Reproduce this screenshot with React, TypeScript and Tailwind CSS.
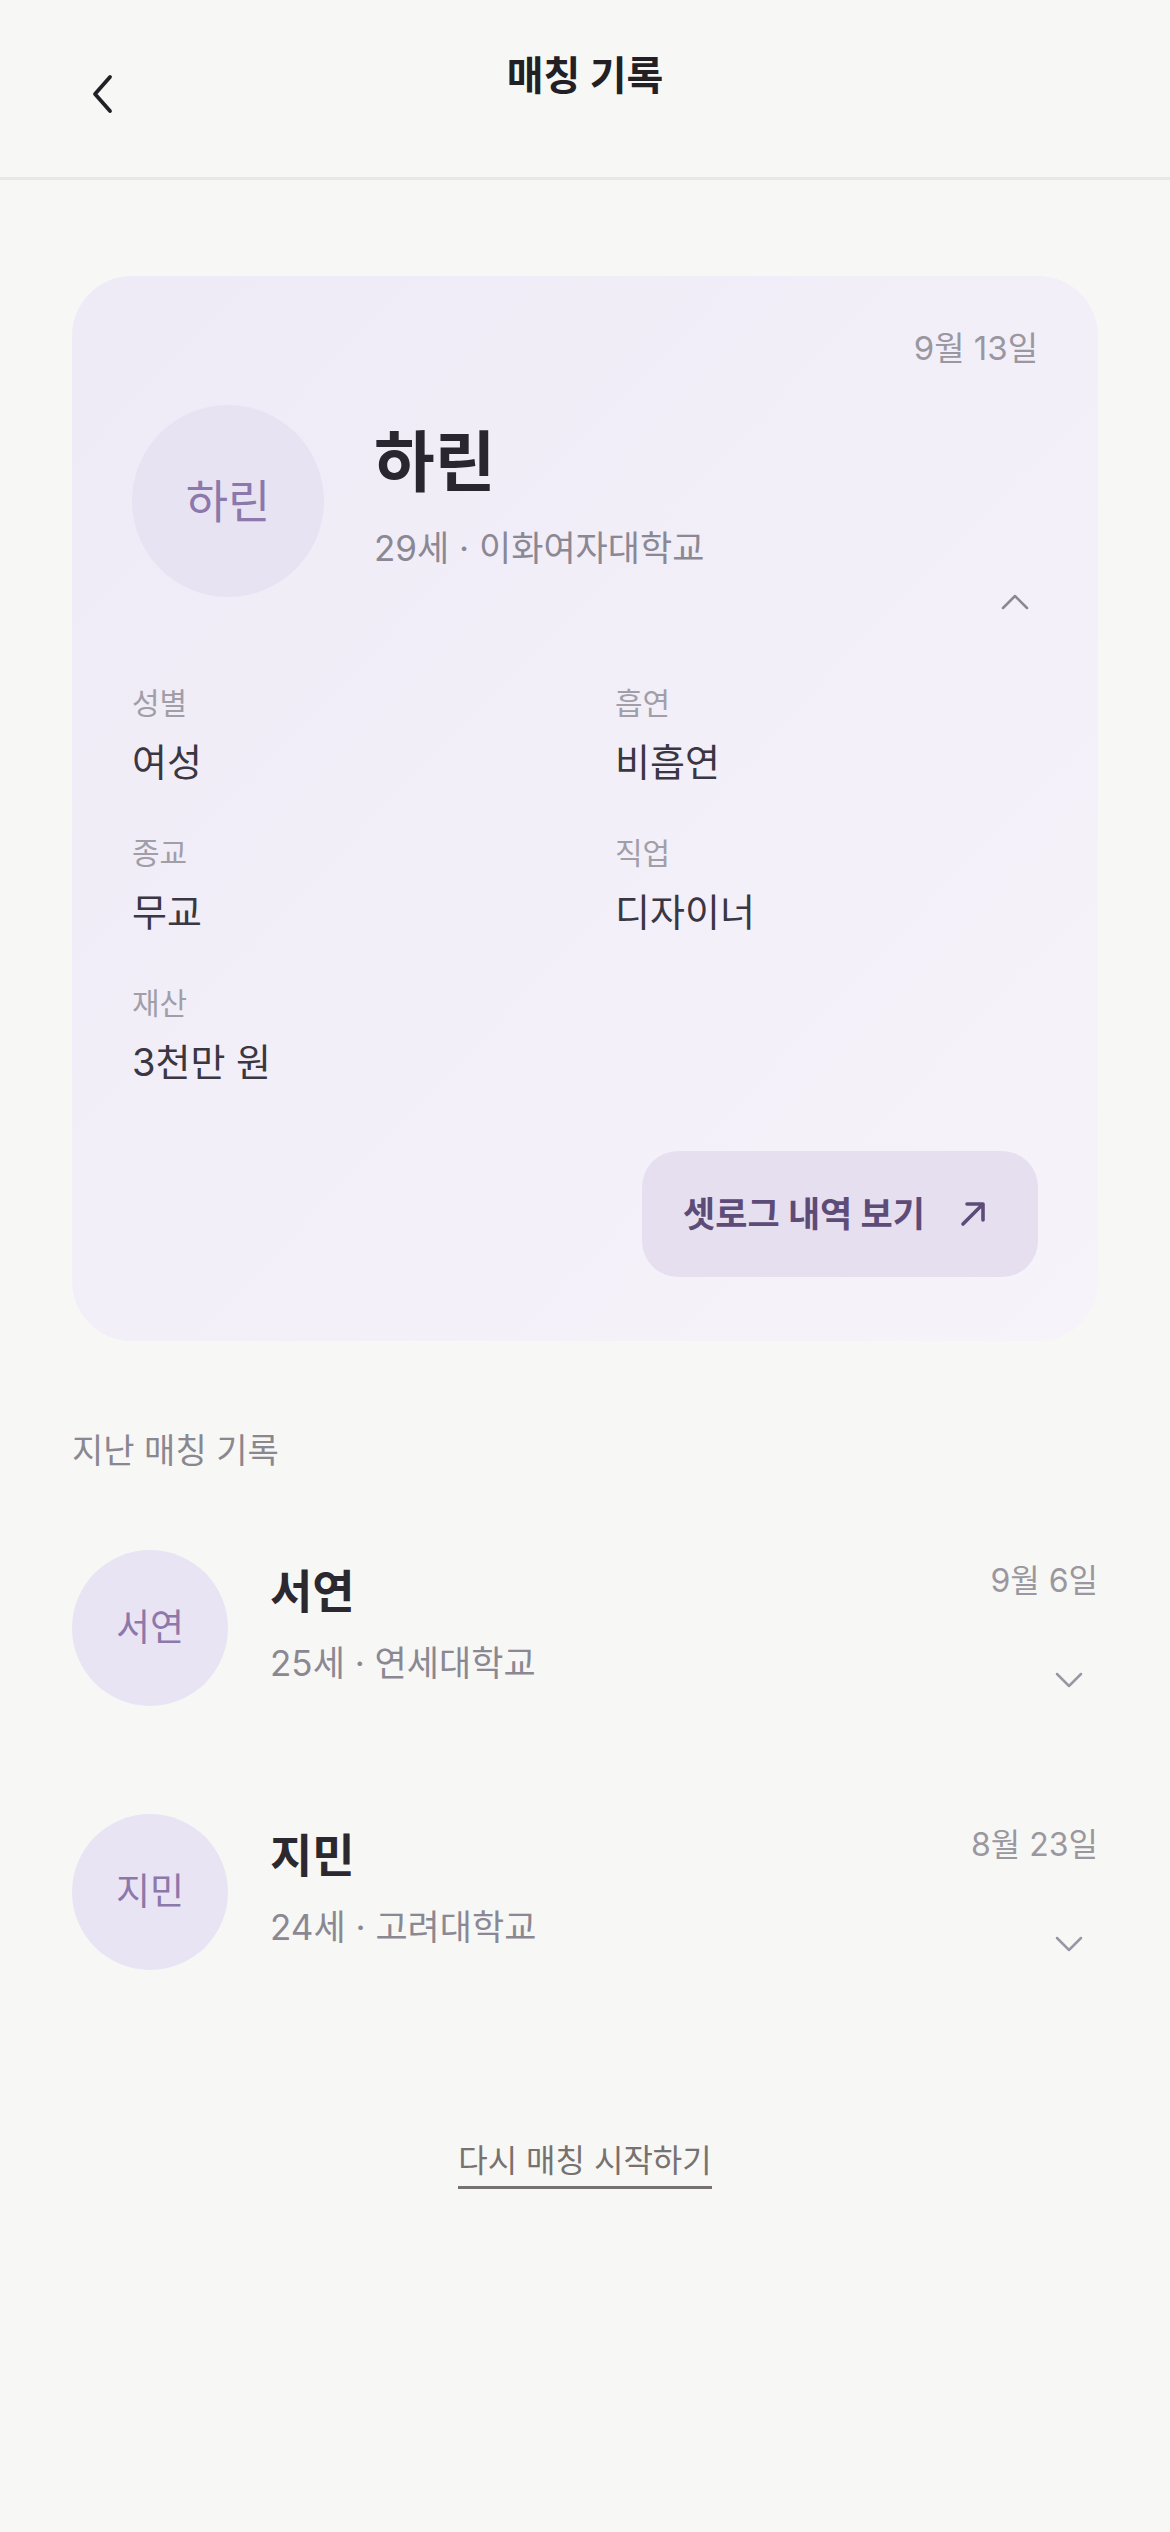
import React from 'react';

interface PastMatch {
    name: string;
    age: number;
    school: string;
    date: string;
}

const pastMatches: PastMatch[] = [
    { name: '서연', age: 25, school: '연세대학교', date: '9월 6일' },
    { name: '지민', age: 24, school: '고려대학교', date: '8월 23일' },
];

const details = [
    { label: '성별', value: '여성' },
    { label: '흡연', value: '비흡연' },
    { label: '종교', value: '무교' },
    { label: '직업', value: '디자이너' },
    { label: '재산', value: '3천만 원' },
];

function Chevron({ up, color }: { up?: boolean; color: string }) {
    return (
        <svg width="28" height="16" viewBox="0 0 28 16" fill="none">
            <path
                d={up ? 'M2 14 L14 2 L26 14' : 'M2 2 L14 14 L26 2'}
                stroke={color}
                strokeWidth="2.5"
                strokeLinecap="round"
                strokeLinejoin="round"
            />
        </svg>
    );
}

export default function App() {
    return (
        <div
            className="min-h-[2532px] w-full bg-[#f7f7f5] text-[#2b2830]"
            style={{ fontFamily: 'Inter, "Noto Sans CJK KR", sans-serif' }}
        >
            {/* header */}
            <header className="h-[180px] border-b-[3px] border-[#e9e8e4] grid grid-cols-[1fr_auto_1fr]">
                <div className="pl-[90px] pt-[74px]">
                    <svg width="24" height="40" viewBox="0 0 24 40" fill="none">
                        <path d="M20 3 L5 20 L20 37" stroke="#222025" strokeWidth="3.8" strokeLinecap="round" strokeLinejoin="round" />
                    </svg>
                </div>
                <h1 className="pt-[50px] text-[40px] leading-[52px] font-bold text-[#222025]">매칭 기록</h1>
                <div />
            </header>

            {/* current match card */}
            <section className="mx-[72px] mt-[96px] rounded-[60px] bg-linear-to-br from-[#eeebf7] to-[#f6f3fa] px-[60px] pt-[52px] pb-[64px]">
                <div className="text-right text-[33px] leading-[40px] text-[#9a97a0]">9월 13일</div>

                <div className="mt-[37px] flex items-start">
                    <div className="w-[192px] h-[192px] rounded-full bg-[#e8e3f2] flex items-center justify-center text-[46px] text-[#8c78aa] shrink-0">
                        하린
                    </div>
                    <div className="ml-[50px] flex-1 pt-[19px]">
                        <div className="text-[66px] leading-[76px] font-bold text-[#2a2630]">하린</div>
                        <div className="mt-[24px] text-[35px] leading-[48px] text-[#8b8893]">29세 · 이화여자대학교</div>
                    </div>
                    <div className="self-end mb-[-13px] mr-[9px]">
                        <Chevron up color="#8b8893" />
                    </div>
                </div>

                <div className="mt-[86px] grid grid-cols-2 gap-x-[60px] gap-y-[47px]">
                    {details.map((d) => (
                        <div key={d.label}>
                            <div className="text-[30px] leading-[40px] text-[#a19ea8]">{d.label}</div>
                            <div className="mt-[15px] text-[38px] leading-[48px] text-[#3a3642]">{d.value}</div>
                        </div>
                    ))}
                </div>

                <div className="mt-[65px] flex justify-end">
                    <button className="w-[396px] h-[126px] rounded-[36px] bg-[#e6dff0] flex items-center pl-[41px] gap-[34px] text-[35px] font-bold text-[#5e4c78]">
                        <span>셋로그 내역 보기</span>
                        <svg width="28" height="28" viewBox="0 0 28 28" fill="none">
                            <path d="M4 24 L23 5 M8 4 H24 V20" stroke="#5e4c78" strokeWidth="3.6" strokeLinecap="round" strokeLinejoin="round" />
                        </svg>
                    </button>
                </div>
            </section>

            {/* past matches */}
            <section className="px-[72px] mt-[88px]">
                <h2 className="text-[34px] leading-[44px] text-[#8a8790]">지난 매칭 기록</h2>
                <ul className="mt-[77px] flex flex-col gap-[108px]">
                    {pastMatches.map((m) => (
                        <li key={m.name} className="flex items-start">
                            <div className="w-[156px] h-[156px] rounded-full bg-[#e9e4f3] flex items-center justify-center text-[37px] text-[#8c78aa] shrink-0">
                                {m.name}
                            </div>
                            <div className="ml-[42px] flex-1 pt-[13px]">
                                <div className="text-[46px] leading-[56px] font-bold text-[#2b2830]">{m.name}</div>
                                <div className="mt-[22px] text-[35px] leading-[44px] text-[#8b8893]">
                                    {m.age}세 · {m.school}
                                </div>
                            </div>
                            <div className="flex flex-col items-end pt-[11px]">
                                <div className="text-[32px] leading-[40px] text-[#9a97a0]">{m.date}</div>
                                <div className="mt-[71px] mr-[15px]">
                                    <Chevron color="#9a96a5" />
                                </div>
                            </div>
                        </li>
                    ))}
                </ul>
            </section>

            <div className="mt-[171px] flex justify-center">
                <button className="text-[32px] leading-[40px] text-[#77716f] pb-[5px] border-b-[3px] border-[#77716f]">
                    다시 매칭 시작하기
                </button>
            </div>
        </div>
    );
}
